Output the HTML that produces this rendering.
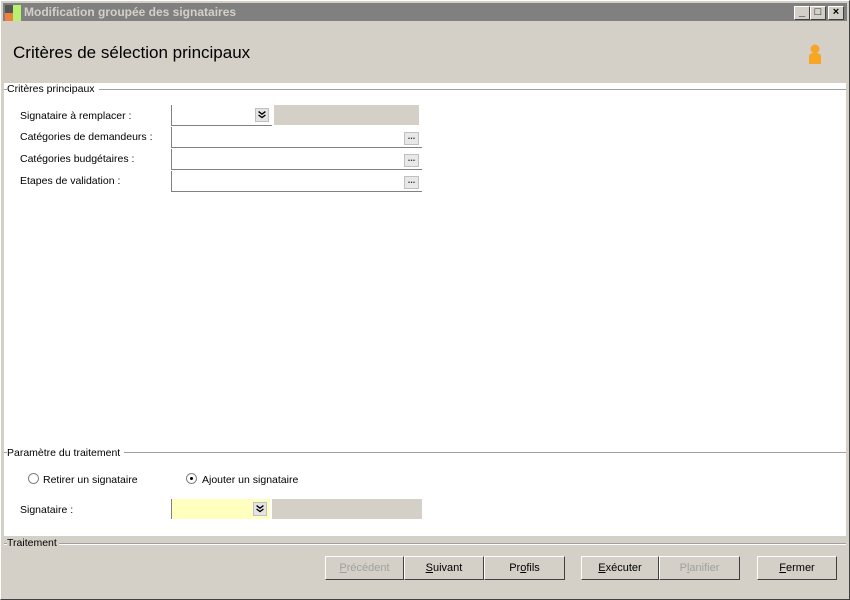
<!DOCTYPE html>
<html><head><meta charset="utf-8"><style>
*{margin:0;padding:0;box-sizing:border-box}
body{width:850px;height:600px;background:#d4d0c8;position:relative;overflow:hidden;font-family:"Liberation Sans",sans-serif;font-size:10.5px;color:#000}
.a{position:absolute}
.win{left:0;top:0;width:850px;height:600px;border:1px solid #fff;border-right-color:#404040;border-bottom-color:#404040;outline:1px solid #d4d0c8}
.title{left:3px;top:3px;width:844px;height:18px;background:#808080;color:#d4d0c8;font-weight:bold;font-size:12px;line-height:18px;padding-left:21px}
.tb{top:6px;width:16px;height:14px;background:#d4d0c8;border:1px solid #fff;border-right-color:#404040;border-bottom-color:#404040;font-size:11px;line-height:11px;text-align:center;font-weight:bold}
.white{left:4px;top:83px;width:842px;height:453px;background:#fff}
.sec{background:#fff;padding-right:4px}
.line{height:2px;border-top:1px solid #a0a0a0;border-bottom:1px solid #fff}
.field{height:21px;border-left:1px solid #808080;border-bottom:1px solid #808080;background:#fff}
.dots{width:15px;height:13px;background:#e8e8e8;border:1px solid #c0c0c0;font-size:9px;line-height:7px;text-align:center;font-weight:bold;color:#333}
.btn{top:556px;height:24px;background:#d4d0c8;border:1px solid #fff;border-right-color:#404040;border-bottom-color:#404040;text-align:center;line-height:22px;font-size:11px}
.dis{color:#a0a0a0}
.rad{width:11px;height:11px;border-radius:50%;border:1px solid #808080;background:#fff}
.chev{width:14px;height:14px;background:#e4e4e4;border:1px solid #c0c0c0}
</style></head><body>
<div class="a win"></div>
<div class="a title">Modification groupée des signataires</div>
<div class="a" style="left:5px;top:5px;width:8px;height:8px;background:#555"></div>
<div class="a" style="left:5px;top:13px;width:8px;height:8px;background:#f08040"></div>
<div class="a" style="left:13px;top:5px;width:8px;height:16px;background:#b8f070"></div>
<div class="a tb" style="left:794px">_</div>
<div class="a tb" style="left:810px">□</div>
<div class="a tb" style="left:828px">×</div>
<div class="a" style="left:13px;top:43px;font-size:17px">Critères de sélection principaux</div>
<svg class="a" style="left:806px;top:43px" width="18" height="22"><circle cx="9" cy="6" r="4.5" fill="#f6a623"/><path d="M3 21 L3 13 Q3 10 9 10 Q15 10 15 13 L15 21 Z" fill="#f6a623"/></svg>
<div class="a white"></div>
<div class="a line" style="left:4px;top:89px;width:842px"></div>
<div class="a sec" style="left:7px;top:83px">Critères principaux</div>
<div class="a" style="left:20px;top:110px">Signataire à remplacer :</div>
<div class="a" style="left:20px;top:131px">Catégories de demandeurs :</div>
<div class="a" style="left:20px;top:153px">Catégories budgétaires :</div>
<div class="a" style="left:20px;top:175px">Etapes de validation :</div>
<div class="a field" style="left:171px;top:105px;width:101px"></div>
<svg class="a chev" style="left:255px;top:108px" viewBox="0 0 14 14"><path d="M3 3l4 3 4-3M3 7l4 3 4-3" stroke="#000" stroke-width="1.6" fill="none"/></svg>
<div class="a" style="left:274px;top:105px;width:145px;height:20px;background:#d4d0c8"></div>
<div class="a field" style="left:171px;top:127px;width:251px"></div>
<div class="a field" style="left:171px;top:149px;width:251px"></div>
<div class="a field" style="left:171px;top:171px;width:251px"></div>
<div class="a dots" style="left:404px;top:132px">...</div>
<div class="a dots" style="left:404px;top:154px">...</div>
<div class="a dots" style="left:404px;top:176px">...</div>
<div class="a line" style="left:4px;top:452px;width:842px"></div>
<div class="a sec" style="left:7px;top:447px">Paramètre du traitement</div>
<div class="a rad" style="left:28px;top:473px"></div>
<div class="a" style="left:43px;top:474px">Retirer un signataire</div>
<div class="a rad" style="left:186px;top:473px"><div style="width:3px;height:3px;background:#000;margin:3px;border-radius:50%"></div></div>
<div class="a" style="left:202px;top:474px">Ajouter un signataire</div>
<div class="a" style="left:20px;top:504px">Signataire :</div>
<div class="a" style="left:171px;top:499px;width:99px;height:20px;background:#ffffc0;border-left:1px solid #808080"></div>
<svg class="a chev" style="left:253px;top:502px" viewBox="0 0 14 14"><path d="M3 3l4 3 4-3M3 7l4 3 4-3" stroke="#000" stroke-width="1.6" fill="none"/></svg>
<div class="a" style="left:272px;top:499px;width:150px;height:20px;background:#d4d0c8"></div>
<div class="a line" style="left:4px;top:543px;width:842px"></div>
<div class="a" style="left:7px;top:537px;background:#d4d0c8;padding-right:2px">Traitement</div>
<div class="a btn dis" style="left:325px;width:79px"><u>P</u>récédent</div>
<div class="a btn" style="left:404px;width:80px"><u>S</u>uivant</div>
<div class="a btn" style="left:484px;width:81px">Pr<u>o</u>fils</div>
<div class="a btn" style="left:581px;width:78px"><u>E</u>xécuter</div>
<div class="a btn dis" style="left:659px;width:81px">P<u>l</u>anifier</div>
<div class="a btn" style="left:757px;width:80px"><u>F</u>ermer</div>
</body></html>
